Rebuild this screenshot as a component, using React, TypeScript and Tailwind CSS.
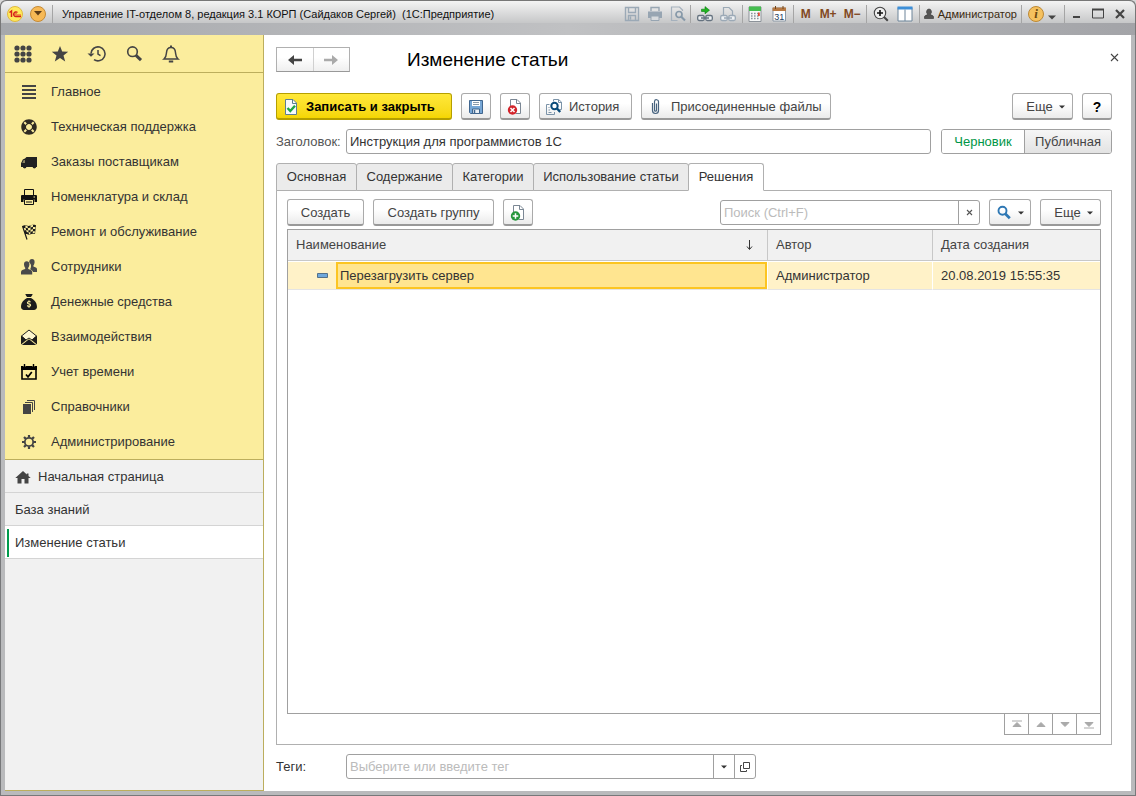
import React from "react";
import { FaLifeRing } from "react-icons/fa";
import { FaSackDollar } from "react-icons/fa6";

type IconProps = { size?: number; className?: string; children: React.ReactNode; box?: number };

function Svg({ size = 16, className = "", children, box = 16 }: IconProps) {
  return (
    <svg
      width={size}
      height={size}
      viewBox={`0 0 ${box} ${box}`}
      fill="none"
      className={`shrink-0 ${className}`}
      aria-hidden="true"
    >
      {children}
    </svg>
  );
}

/* ---------- sidebar icons ---------- */

const LinesIcon = () => (
  <Svg>
    <path d="M1 2h14M1 6h14M1 10h14M1 14h14" stroke="#444" strokeWidth="2" />
  </Svg>
);

const VanIcon = () => (
  <Svg>
    <path d="M5.500 3H16v10h-1a1.800 1.800 0 0 1-3.400 0H5.400a1.800 1.800 0 0 1-3.400 0H0V9.200L1.800 5.400 4 4.600z" fill="#222" />
    <path d="M2.400 6.200 1.300 9H4V6z" fill="#8a8463" />
    <circle cx="3.700" cy="12.800" r="1.500" fill="#222" />
    <circle cx="13.300" cy="12.800" r="1.500" fill="#222" />
  </Svg>
);

const PrinterIcon = () => (
  <Svg>
    <path d="M3.500 6.500v-6h9v6" stroke="#111" />
    <path d="M1 6h14a1 1 0 0 1 1 1v6h-2.500v-2.500h-11V13H0V7a1 1 0 0 1 1-1z" fill="#111" />
    <path d="M3.500 10.500h9v5h-9z" fill="#fbed9d" stroke="#111" />
    <path d="M5 13h6" stroke="#111" />
    <path d="M12.500 8h1.500" stroke="#fbed9d" />
  </Svg>
);

const FlagIcon = () => (
  <Svg>
    <path d="M1.500 2 6 15.500" stroke="#1a1a1a" strokeWidth="1.200" />
    <path d="M1.500 2C4 0 6 2.500 8.500 1.800 10.800 1.100 12 .2 15 1.200L14 10c-2.300-.8-3.600 0-5.200.6C6.800 11.200 6 9.500 4.200 10.200z" fill="#1a1a1a" />
    <g fill="#fbed9d">
      <path d="m4.300 1.600 2.300.6.3 2-2.400-.5zM9.500 1.600l2.500-.8v2l-2.400.8zM2.800 4.200l1.700-.5.600 2.200-1.600.5zM6.900 4.200l2.700-.6-.1 2.300-2.300.5zM12 2.900l2.400.2-.2 2-2.300-.2zM5.100 6l2.100.4.500 2-2-.3zM9.500 5.900l2.400-1v2.200l-2.400.9zM7.700 8.400 9.500 8l-.3 2-1.200.3zM11.800 7.100l2.100.2-.2 2-1.900-.2z" />
    </g>
  </Svg>
);

const PeopleIcon = () => (
  <Svg>
    <g fill="#4a4a4a">
      <path d="M8.200 3.200C8.200 1 9.400 0 11 0s2.800 1 2.600 3.200c-.1 1.600-.7 2.700-1.200 3.300v1.100c1.600.6 3.600 1 3.600 2.600V13h-4c-.4-1.700-1.800-2.200-2.900-2.700.8-1.200 1.100-2.900.8-4.600-.4-.8-1-1.600-1.700-2.500z" />
      <path d="M3 5.400C2.900 3.200 4.100 2.200 5.700 2.200s2.800 1 2.700 3.200C8.300 7 7.800 8.200 7.200 8.800V10c1.800.7 4 1.100 4 3v2.500H0V13c0-1.900 2.300-2.300 4.200-3V8.800C3.600 8.200 3.100 7 3 5.400z" />
    </g>
  </Svg>
);

const MailIcon = () => (
  <Svg>
    <path d="M.5 7 8 1l7.500 6-4.500 4-3-2-3 2z" stroke="#222" fill="#fdf6cf" />
    <path d="M0 6.500 5.500 11 0 15.500zM16 6.500 10.500 11l5.500 4.500zM.8 16 8 10.200l7.200 5.800z" fill="#1c1c1c" />
  </Svg>
);

const CalendarCheckIcon = () => (
  <Svg>
    <path d="M1 3.500h14V15H1z" stroke="#000" strokeWidth="1.600" />
    <path d="M0 2h2.500v2h2V2h7v2h2V2H16v4H0z" fill="#000" />
    <path d="M3.500 0v3M12.500 0v3" stroke="#000" strokeWidth="1.400" />
    <path d="m5 10.500 2 2.300L10.800 8" stroke="#000" strokeWidth="1.700" />
  </Svg>
);

const BooksIcon = () => (
  <Svg>
    <path d="M2 5h8v10H2z" fill="#444" />
    <path d="M4 3.500h7.500V13M6 1.500h7.500V11" stroke="#444" />
  </Svg>
);

const GearIcon = () => (
  <Svg>
    <circle cx="8" cy="8" r="4.200" stroke="#444" strokeWidth="1.800" />
    <path
      d="M8 1v2.500M8 12.500V15M1 8h2.500M12.500 8H15M3 3l1.900 1.900M11.100 11.100 13 13M13 3l-1.900 1.900M4.900 11.100 3 13"
      stroke="#444"
      strokeWidth="2.200"
    />
  </Svg>
);

const HomeIcon = () => (
  <Svg>
    <path d="M8 2 .3 9h2.200v5.500H6.500V10h3v4.500h4V9h2.200L13.500 7V4.500h-1.700v.9z" fill="#444" />
  </Svg>
);

/* ---------- command bar icons ---------- */

const sheet = "M2.500.5h7.500l3.500 3.500v11.500h-11z";
const fold = "M9.500.5V4.500h4";

const SheetCheckIcon = () => (
  <Svg>
    <path d={sheet} fill="#f7fafb" stroke="#5d7f93" />
    <path d={fold} stroke="#5d7f93" />
    <path d="m4.500 9 2.800 3L12 6.800" stroke="#1fa545" strokeWidth="2.400" />
  </Svg>
);

const DisketteIcon = () => (
  <Svg>
    <path d="M1.500 1.500h13v13h-12l-1-1z" fill="#77a7d6" stroke="#40668f" />
    <path d="M4 2h8v5H4z" fill="#fff" />
    <path d="M5 3.500h6M5 5.500h6" stroke="#8a9aaa" />
    <path d="M4.500 10h7v4.500h-7z" fill="#e9eff5" stroke="#40668f" />
    <path d="M6.500 11v3" stroke="#40668f" strokeWidth="1.500" />
  </Svg>
);

const SheetDeleteIcon = () => (
  <Svg>
    <path d="M3.500 8V.5H10L13.500 4v10.500H9" stroke="#7b8794" fill="#fff" />
    <path d="M9.500.5v4h4" stroke="#7b8794" />
    <circle cx="5.500" cy="11" r="4.700" fill="#d2232a" />
    <path d="m3.500 9 4 4m0-4-4 4" stroke="#fff" strokeWidth="1.500" />
  </Svg>
);

const SheetAddIcon = () => (
  <Svg>
    <path d="M3.500 8V.5H10L13.500 4v10.500H9" stroke="#7b8794" fill="#fff" />
    <path d="M9.500.5v4h4" stroke="#7b8794" />
    <circle cx="5.500" cy="11" r="4.700" fill="#27963c" />
    <path d="M5.500 8.200v5.600M2.700 11h5.600" stroke="#fff" strokeWidth="1.500" />
  </Svg>
);

const HistoryIcon = () => (
  <Svg>
    <path d="M7.500 2.500v-2h5L15.500 3v7.500h-2M12.500.5V3.500h3" stroke="#7b93a8" />
    <path d="M3.500 5.500h-3v10h8v-2.500M2.500 8.500h1M2.500 11h1.500M2.500 13.500h3" stroke="#7b93a8" />
    <circle cx="8.500" cy="7" r="3.200" fill="#fff" stroke="#0a4a78" strokeWidth="2" />
    <path d="m10.800 9.300 3.400 3.700" stroke="#0a4a78" strokeWidth="2.400" />
  </Svg>
);

const ClipIcon = () => (
  <Svg>
    <path
      d="M4.500 4v7.500a3 3 0 0 0 6 0V3a2 2 0 0 0-4-.5v8.700a1 1 0 0 0 2 0V4.500"
      stroke="#46627e"
      strokeWidth="1.200"
    />
  </Svg>
);

const LensIcon = () => (
  <Svg>
    <circle cx="6.500" cy="5.800" r="4" stroke="#2f78b4" strokeWidth="1.900" />
    <path d="m9.300 8.700 4.500 4.500" stroke="#2f78b4" strokeWidth="2.700" />
  </Svg>
);

const Caret = () => (
  <svg width="6" height="4" viewBox="0 0 6 4" className="shrink-0" aria-hidden="true">
    <path d="M0 .5h6L3 3.500z" fill="#333" />
  </svg>
);

/* ---------- title bar icons ---------- */

const SaveGrey = () => (
  <Svg>
    <path d="M1.500 1.500h13v13h-13zM4.500 1.500v5h7v-5M4.500 14.500v-5h7v5M6.500 10.500v3" stroke="#9ba9b6" strokeWidth="1.400" />
  </Svg>
);
const PrintGrey = () => (
  <Svg>
    <path d="M4 5V1.500h8V5" stroke="#97a5b2" strokeWidth="1.400" />
    <path d="M1 5.500h14V12H1z" fill="#97a5b2" />
    <path d="M4 10h8v4.500H4z" fill="#d7dadd" stroke="#97a5b2" />
  </Svg>
);
const PreviewGrey = () => (
  <Svg>
    <path d="M12.500 5V4L9.500 1H1.500v13.500h6" stroke="#a5b1bd" strokeWidth="1.200" />
    <circle cx="9" cy="8.500" r="3" stroke="#8799a9" strokeWidth="1.700" />
    <path d="m11 10.500 4 4" stroke="#8799a9" strokeWidth="2.200" />
  </Svg>
);
const Chain = ({ color }: { color: string }) => (
  <g stroke={color} strokeWidth="1.300">
    <rect x=".7" y="9.500" width="6.500" height="5" rx="1.500" fill="#eef1f3" />
    <rect x="8.800" y="9.500" width="6.500" height="5" rx="1.500" fill="#eef1f3" />
    <path d="M4 12h8" strokeWidth="1.500" />
  </g>
);
const LinkGo = () => (
  <Svg>
    <Chain color="#65727f" />
    <path d="M4.500 3.200h3.500V.6l4.500 3.600L8 7.800V5.500H4.500z" fill="#20b520" stroke="#087a10" strokeWidth=".6" />
  </Svg>
);
const LinkGrey = () => (
  <Svg>
    <path d="M3.500 9V1.500H9L12.500 5v4" stroke="#9ba9b6" strokeWidth="1.200" />
    <Chain color="#9ba9b6" />
  </Svg>
);
const CalcIcon = () => (
  <Svg>
    <path d="M2 1h12v14.500H2z" fill="#f7f8f8" stroke="#8c9299" />
    <path d="M2 .5h12v4.500H2z" fill="#45bd4f" />
    <path d="M4 7.500h8M4 10h8M4 12.500h8" stroke="#8b959d" strokeWidth="1.500" strokeDasharray="1.600 1.400" />
    <path d="M11 6.500h1.800v3.500H11z" fill="#e14a35" />
  </Svg>
);
const DateIcon = () => (
  <Svg>
    <path d="M2 2h12.500v13H2z" fill="#fff" stroke="#8c98a5" />
    <path d="M1.500 1.500h13.500V5H1.500z" fill="#b67842" />
    <path d="M4.500 0v3M12 0v3" stroke="#754414" />
    <text x="8.200" y="13.500" textAnchor="middle" fontSize="9" fill="#24415f" fontFamily="Liberation Sans, sans-serif">
      31
    </text>
  </Svg>
);
const ZoomPlus = () => (
  <Svg>
    <circle cx="7" cy="7" r="5.700" fill="#eee" stroke="#444" strokeWidth="1.100" />
    <path d="M7 4v6M4 7h6" stroke="#111" strokeWidth="1.600" />
    <path d="m11 11 3.800 3.800" stroke="#444" strokeWidth="2" />
  </Svg>
);
const PanelsIcon = () => (
  <Svg>
    <path d="M1 1.500h14v13.500H1z" fill="#fff" stroke="#6d8499" />
    <path d="M.5.5h15V3.500H.5z" fill="#3d8fd8" />
    <path d="M8 3.500v11.500" stroke="#6d8499" />
  </Svg>
);

const sections: { label: string; icon: React.ReactNode }[] = [
  { label: "Главное", icon: <LinesIcon /> },
  { label: "Техническая поддержка", icon: <FaLifeRing size={16} color="#2e2a22" /> },
  { label: "Заказы поставщикам", icon: <VanIcon /> },
  { label: "Номенклатура и склад", icon: <PrinterIcon /> },
  { label: "Ремонт и обслуживание", icon: <FlagIcon /> },
  { label: "Сотрудники", icon: <PeopleIcon /> },
  { label: "Денежные средства", icon: <FaSackDollar size={16} color="#1c1c1c" /> },
  { label: "Взаимодействия", icon: <MailIcon /> },
  { label: "Учет времени", icon: <CalendarCheckIcon /> },
  { label: "Справочники", icon: <BooksIcon /> },
  { label: "Администрирование", icon: <GearIcon /> },
];

const tabs = [
  { label: "Основная", width: "w-[81px]" },
  { label: "Содержание", width: "w-[97px]" },
  { label: "Категории", width: "w-[82px]" },
  { label: "Использование статьи", width: "w-[156px]" },
  { label: "Решения", width: "w-[76px]" },
];

const button =
  "flex h-[27px] shrink-0 items-center rounded-[3px] border border-[#aaa] border-b-2 border-b-[#999] bg-linear-to-b from-white from-40% to-[#ebebeb] pt-px text-[#444]";

const Divider = () => <span className="h-[18px] w-px bg-[#a5a5a5]" />;

function TitleBar() {
  const tool = "flex h-5 items-center justify-center";
  return (
    <header className="h-[35px] rounded-t-md border-x border-t border-[#777] bg-linear-to-r from-[#a6a8ac] via-[#c0c1c3] to-[#a3a4a8]">
      <div className="flex h-[22px] items-center rounded-t-md bg-linear-to-b from-[#f4f4f4] to-[#c6c7c8] pl-[6px] pr-2 pt-[3px] text-[11px] text-[#111]">
        <svg width="16" height="16" viewBox="0 0 16 16" className="shrink-0" aria-hidden="true">
          <circle cx="8" cy="8" r="7.500" fill="#ffe95a" stroke="#dfb940" />
          <path d="M2.500 6.500 4.500 5v6" stroke="#d6201c" strokeWidth="1.500" fill="none" />
          <path d="M10.500 6.500a2.300 2.300 0 1 0-1.500 4h5" stroke="#d6201c" strokeWidth="1.400" fill="none" />
          <path d="M9.700 7.700a1 1 0 1 0-.6 1.300H14" stroke="#d6201c" strokeWidth=".8" fill="none" />
        </svg>
        <button aria-label="Меню" className="ml-[7px] flex size-4 items-center justify-center rounded-full border border-[#c58a35] bg-[#f7b955]">
          <svg width="8" height="5" viewBox="0 0 8 5" aria-hidden="true">
            <path d="M0 0h8L4 4.500z" fill="#5d3c17" />
          </svg>
        </button>
        <span className="ml-[6px] mr-[9px] h-[18px] w-px shrink-0 bg-[#a5a5a5]" />
        <h1 className="min-w-0 flex-1 truncate whitespace-pre">
          Управление IT-отделом 8, редакция 3.1 КОРП (Сайдаков Сергей)  (1С:Предприятие)
        </h1>
        <div className="flex shrink-0 items-center">
          <div className="mr-1 flex gap-[7px]">
            <button aria-label="Сохранить" className={tool}><SaveGrey /></button>
            <button aria-label="Печать" className={tool}><PrintGrey /></button>
            <button aria-label="Просмотр" className={tool}><PreviewGrey /></button>
          </div>
          <Divider />
          <div className="mx-[6px] flex gap-[7px]">
            <button aria-label="Перейти по ссылке" className={tool}><LinkGo /></button>
            <button aria-label="Получить ссылку" className={tool}><LinkGrey /></button>
          </div>
          <Divider />
          <div className="ml-1 mr-[6px] flex gap-2">
            <button aria-label="Калькулятор" className={tool}><CalcIcon /></button>
            <button aria-label="Календарь" className={tool}><DateIcon /></button>
          </div>
          <Divider />
          <div className="mx-[6px] flex gap-2 text-[12px] font-bold text-[#82491f]">
            <button className="w-3">M</button>
            <button className="w-4">M+</button>
            <button className="w-4">M−</button>
          </div>
          <Divider />
          <div className="mx-[6px] flex gap-2">
            <button aria-label="Масштаб" className={tool}><ZoomPlus /></button>
            <button aria-label="Панели" className={tool}><PanelsIcon /></button>
          </div>
          <Divider />
          <button className="mx-1 flex items-center gap-1 text-[#3a2a10]">
            <svg width="10" height="12" viewBox="0 0 10 12" aria-hidden="true">
              <path d="M5 1a2.500 2.800 0 0 1 1.500 5v.8C8 7.300 9.500 7.600 9.500 9v1.500h-9V9c0-1.400 1.500-1.700 3-2.200V6A2.500 2.800 0 0 1 5 1z" fill="#555" stroke="#333" strokeWidth=".6" />
            </svg>
            Администратор
          </button>
          <Divider />
          <button aria-label="Справка" className="ml-[6px] flex size-4 items-center justify-center rounded-full border border-[#bd8935] bg-[#f5c15f] font-['Liberation_Serif',serif] text-[13px] font-bold italic leading-none text-[#6b480f]">
            i
          </button>
          <button aria-label="Ещё" className="ml-1 mr-2 flex h-3 items-end">
            <svg width="8" height="5" viewBox="0 0 8 5" aria-hidden="true">
              <path d="M0 .5h8L4 4.500z" fill="#444" />
            </svg>
          </button>
          <Divider />
          <div className="flex items-center gap-2 pl-1">
            <button aria-label="Свернуть"><Svg size={14} box={14}><path d="M4 10h7" stroke="#444" strokeWidth="2" /></Svg></button>
            <button aria-label="Развернуть"><Svg size={14} box={14}><path d="M1.500 2.500h11v8.500h-11z" stroke="#444" /><path d="M1 2.500h12" stroke="#444" strokeWidth="2" /></Svg></button>
            <button aria-label="Закрыть окно"><Svg size={14} box={14}><path d="m3 3 8 8m0-8-8 8" stroke="#444" strokeWidth="2.200" /></Svg></button>
          </div>
        </div>
      </div>
    </header>
  );
}

function Sidebar() {
  const openRow = "flex h-[33px] items-center border-b border-[#d4d4d4] pt-px text-[#333]";
  return (
    <aside className="flex w-[259px] shrink-0 flex-col border-b border-r border-[#bcae5d] bg-[#f1f1f1]">
      <div className="flex h-[38px] items-center gap-[15px] border-b border-[#bcae5d] bg-[#fbed9d] pl-[7px] text-[#444]">
        <button aria-label="Разделы">
          <Svg size={22} box={22}>
            <g fill="#444">
              {[5, 11, 17].map((y) => [5, 11, 17].map((x) => <circle key={`${x}-${y}`} cx={x} cy={y} r="2.600" />))}
            </g>
          </Svg>
        </button>
        <button aria-label="Избранное">
          <Svg size={22} box={22}>
            <path d="m11 3 2.200 5.500 6 .3-4.700 3.700 1.700 5.900L11 15l-5.200 3.400 1.700-5.900-4.700-3.700 6-.3z" fill="#444" />
          </Svg>
        </button>
        <button aria-label="История">
          <Svg size={22} box={22}>
            <path d="M5 10.500A7 7 0 1 1 8 16.600" stroke="#444" strokeWidth="1.600" />
            <path d="m1.500 10.500 3.500 3.300 3.500-3.300z" fill="#444" />
            <path d="M12 7v4.200l2.500 1.500" stroke="#444" strokeWidth="1.500" />
          </Svg>
        </button>
        <button aria-label="Поиск">
          <Svg size={22} box={22}>
            <circle cx="9.500" cy="8.700" r="4.800" stroke="#444" strokeWidth="1.600" />
            <path d="m13 12.300 5 4.800" stroke="#444" strokeWidth="3" />
          </Svg>
        </button>
        <button aria-label="Уведомления">
          <Svg size={22} box={22}>
            <path d="M4 16c2.300-2 2.300-3.800 2.500-6.500C6.700 6.500 8 4.500 11 4.500s4.300 2 4.500 5c.2 2.700.2 4.500 2.500 6.500z" stroke="#444" strokeWidth="1.500" />
            <path d="M11 2.500v2M8.800 18.500h4.400" stroke="#444" strokeWidth="2" />
          </Svg>
        </button>
      </div>
      <nav className="border-b border-[#bcae5d] bg-[#fbed9d] pt-px" aria-label="Разделы">
        {sections.map((s) => (
          <a key={s.label} href="#" className="flex h-[35px] items-center gap-[14px] pl-4 text-[#333]">
            <span className="flex size-4 items-center justify-center">{s.icon}</span>
            {s.label}
          </a>
        ))}
      </nav>
      <nav aria-label="Открытые окна">
        <a href="#" className={`${openRow} gap-[7px] pl-[10px]`}>
          <HomeIcon />
          Начальная страница
        </a>
        <a href="#" className={`${openRow} pl-[10px]`}>База знаний</a>
        <a href="#" aria-current="page" className={`${openRow} bg-white pl-[2px]`}>
          <span className="mr-[6px] h-7 w-[2px] bg-[#009b4c]" />
          Изменение статьи
        </a>
      </nav>
    </aside>
  );
}

function Pager() {
  const arrows = [
    { label: "В начало", d: "M1 1h10M2 6.500h8L6 2.500z" },
    { label: "Вверх", d: "M2 6.500h8L6 2.500z" },
    { label: "Вниз", d: "M2 2.500h8L6 6.500z" },
    { label: "В конец", d: "M2 2.500h8L6 6.500zM1 8h10" },
  ];
  return (
    <div className="flex justify-end">
      {arrows.map((a, i) => (
        <button
          key={a.label}
          aria-label={a.label}
          className={`flex h-[21px] items-center justify-center border-b border-r border-[#a0a0a0] ${i === 0 ? "w-[25px] border-l" : "w-6"}`}
        >
          <svg width="12" height="9" viewBox="0 0 12 9" aria-hidden="true">
            <path d={a.d} fill="#aaa" stroke="#aaa" strokeWidth="1" />
          </svg>
        </button>
      ))}
    </div>
  );
}

function Solutions() {
  const th = "h-[31px] border-b border-[#c8c8c8] bg-[#f1f1f1] px-2 text-left font-normal text-[#444]";
  const td = "border-y border-b-[#e4e4e4] border-t-white";
  return (
    <section role="tabpanel" aria-label="Решения" className="flex flex-1 flex-col border border-[#b0b0b0] px-[10px] pb-[9px] pt-2">
      <div className="flex items-center gap-[9px]">
        <button className={`${button} w-[77px] justify-center`}>Создать</button>
        <button className={`${button} w-[121px] justify-center`}>Создать группу</button>
        <button aria-label="Создать копированием" className={`${button} w-[30px] justify-center`}><SheetAddIcon /></button>
        <div className="ml-auto flex h-[25px] w-[260px] rounded-[3px] border border-[#a0a0a0] bg-white">
          <input
            type="text"
            aria-label="Поиск"
            placeholder="Поиск (Ctrl+F)"
            className="min-w-0 flex-1 pl-[3px] outline-none placeholder:text-[#bbb]"
          />
          <button aria-label="Очистить" className="flex w-[21px] items-center justify-center border-l border-[#a0a0a0]">
            <Svg size={7} box={7}><path d="m1 1 5 5m0-5L1 6" stroke="#555" strokeWidth="1.100" /></Svg>
          </button>
        </div>
        <button aria-label="Найти" className={`${button} w-[42px] justify-center gap-[6px]`}><LensIcon /><Caret /></button>
        <button className={`${button} w-[61px] justify-center gap-[6px] pl-[6px]`}>Еще<Caret /></button>
      </div>
      <div className="mt-[3px] flex-1 border border-[#a0a0a0]">
        <table className="w-full table-fixed border-separate border-spacing-0">
          <colgroup>
            <col />
            <col className="w-[165px]" />
            <col className="w-[167px]" />
          </colgroup>
          <thead>
            <tr>
              <th className={`${th} border-r`}>
                <span className="flex items-center justify-between pr-1">
                  Наименование
                  <Svg size={12} box={12}><path d="M6.500 1v9" stroke="#333" /><path d="m4 7.500 2.500 3L9 7.500" stroke="#333" /></Svg>
                </span>
              </th>
              <th className={`${th} border-r`}>Автор</th>
              <th className={th}>Дата создания</th>
            </tr>
          </thead>
          <tbody className="text-[#333]">
            <tr className="bg-[#fff2c8]">
              <td className={`${td} border-r border-r-white p-0`}>
                <div className="flex h-[27px] items-center">
                  <svg width="11" height="6" viewBox="0 0 11 6" className="ml-[29px] mr-2 shrink-0" aria-hidden="true">
                    <path d="M.5.5h10v4H.5z" fill="#6fa8dc" stroke="#54718a" />
                  </svg>
                  <span className="flex h-[27px] flex-1 items-center border-2 border-[#fcc522] bg-[#ffe590] pl-[2px]">Перезагрузить сервер</span>
                </div>
              </td>
              <td className={`${td} border-r border-r-white px-2 py-0`}>Администратор</td>
              <td className={`${td} px-2 py-0`}>20.08.2019 15:55:35</td>
            </tr>
          </tbody>
        </table>
      </div>
      <Pager />
    </section>
  );
}

export default function App() {
  return (
    <div className="flex min-h-screen flex-col bg-[#d8d8d8] font-['Liberation_Sans',Arial,sans-serif] text-[13px] leading-4">
      <TitleBar />
      <div className="flex flex-1 border-x border-b border-[#77787a] bg-[#b9babc] px-1 pb-1">
        <Sidebar />
        <main className="flex min-w-0 flex-1 flex-col bg-white pb-3 pl-3 pr-[19px] pt-3 text-[#333]">
          <div className="flex items-center">
            <div className="flex h-[25px] w-[74px] border border-[#b0b0b0] border-b-[#999] bg-linear-to-b from-white from-40% to-[#efefef]">
              <button aria-label="Назад" className="flex flex-1 items-center justify-center border-r border-[#d0d0d0]">
                <Svg><path d="M1 8l6-5v3.800h8v2.400H7V13z" fill="#444" /></Svg>
              </button>
              <button aria-label="Вперед" className="flex flex-1 items-center justify-center">
                <Svg><path d="M15 8 9 3v3.800H1v2.400h8V13z" fill="#aaa" /></Svg>
              </button>
            </div>
            <h2 className="ml-[57px] flex-1 text-[19px] leading-6 text-black">Изменение статьи</h2>
            <button aria-label="Закрыть" className="-mr-3 flex h-5 w-5 items-center justify-center self-start">
              <Svg size={9} box={9}><path d="m1 1 7 7m0-7L1 8" stroke="#444" strokeWidth="1.100" /></Svg>
            </button>
          </div>

          <div className="mt-[21px] flex gap-[9px]">
            <button className="flex h-[27px] w-44 shrink-0 items-center gap-[7px] rounded-[3px] border border-b-2 border-[#b59f00] bg-linear-to-b from-[#ffe838] to-[#f5d600] pl-[6px] pt-px font-bold text-black">
              <SheetCheckIcon />
              Записать и закрыть
            </button>
            <button aria-label="Записать" className={`${button} w-[30px] justify-center`}><DisketteIcon /></button>
            <button aria-label="Отменить" className={`${button} w-[30px] justify-center`}><SheetDeleteIcon /></button>
            <button className={`${button} w-[93px] gap-[7px] pl-[6px]`}><HistoryIcon />История</button>
            <button className={`${button} w-[190px] gap-[7px] pl-[6px]`}><ClipIcon />Присоединенные файлы</button>
            <button className={`${button} ml-auto w-[61px] justify-center gap-[6px] pl-[6px]`}>Еще<Caret /></button>
            <button aria-label="Справка по форме" className={`${button} w-[30px] justify-center text-[14px] font-bold text-black`}>?</button>
          </div>

          <div className="mt-[9px] flex items-center">
            <label htmlFor="title" className="w-[70px] shrink-0 whitespace-nowrap text-[#555]">Заголовок:</label>
            <input
              id="title"
              type="text"
              defaultValue="Инструкция для программистов 1С"
              className="h-[25px] min-w-0 flex-1 rounded-[3px] border border-[#a0a0a0] bg-white px-[3px] outline-none"
            />
            <div role="group" aria-label="Состояние" className="ml-[10px] flex h-[25px] w-[171px] overflow-hidden rounded-[3px] border border-[#a0a0a0]">
              <button aria-pressed="true" className="flex-1 bg-white text-[#009646]">Черновик</button>
              <button aria-pressed="false" className="w-[87px] border-l border-[#a0a0a0] bg-linear-to-b from-[#f6f6f6] to-[#e3e3e3] text-[#444]">Публичная</button>
            </div>
          </div>

          <div role="tablist" className="relative z-10 -mb-px mt-[9px] flex">
            {tabs.map((t, i) => {
              const active = i === tabs.length - 1;
              return (
                <button
                  key={t.label}
                  role="tab"
                  aria-selected={active}
                  className={`h-7 shrink-0 whitespace-nowrap rounded-t-[3px] border border-[#b0b0b0] ${t.width} ${i > 0 ? "-ml-px" : ""} ${
                    active ? "border-b-white bg-white" : "bg-[#ebebeb]"
                  }`}
                >
                  {t.label}
                </button>
              );
            })}
          </div>
          <Solutions />

          <div className="mt-[9px] flex items-center">
            <label htmlFor="tags" className="w-[70px] shrink-0">Теги:</label>
            <div className="flex h-[25px] w-[410px] rounded-[3px] border border-[#a0a0a0] bg-white">
              <input
                id="tags"
                type="text"
                placeholder="Выберите или введите тег"
                className="min-w-0 flex-1 pl-[3px] outline-none placeholder:text-[#bbb]"
              />
              <button aria-label="Выбрать из списка" className="flex w-[21px] items-center justify-center border-l border-[#a0a0a0]"><Caret /></button>
              <button aria-label="Открыть" className="flex w-[21px] items-center justify-center border-l border-[#a0a0a0]">
                <Svg size={10} box={10}>
                  <path d="M3.500.5h6v6h-6zM2 3.500H.5v6h6V8" stroke="#444" />
                </Svg>
              </button>
            </div>
          </div>
        </main>
      </div>
    </div>
  );
}
